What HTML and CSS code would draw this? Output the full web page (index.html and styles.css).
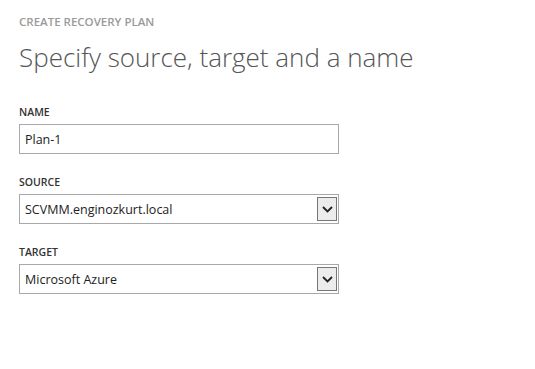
FILE: index.html
```html
<!DOCTYPE html>
<html>
<head>
    <meta charset="utf-8">
    <link rel="stylesheet" href="styles.css">
</head>
<body>
    <div class="wizard-page">
        <div class="wizard-step">CREATE RECOVERY PLAN</div>
        <h1>Specify source, target and a name</h1>

        <div class="field">
            <label for="planName">NAME</label>
            <input type="text" id="planName" value="Plan-1">
        </div>
        <div class="field">
            <label>SOURCE</label>
            <div class="select-box">
                <span>SCVMM.enginozkurt.local</span>
                <span class="select-arrow">
                    <svg width="11" height="7" viewBox="0 0 11 7"><path d="M1 1 L5.5 5.5 L10 1" fill="none" stroke="#222" stroke-width="1.8"/></svg>
                </span>
            </div>
        </div>
        <div class="field">
            <label>TARGET</label>
            <div class="select-box">
                <span>Microsoft Azure</span>
                <span class="select-arrow">
                    <svg width="11" height="7" viewBox="0 0 11 7"><path d="M1 1 L5.5 5.5 L10 1" fill="none" stroke="#222" stroke-width="1.8"/></svg>
                </span>
            </div>
        </div>
    </div>
</body>
</html>
```

FILE: styles.css
```css
body {
    margin: 0;
    background-color: #fff;
    font-family: 'Open Sans', 'Noto Sans', sans-serif;
    color: #222;
}
.wizard-page {
    padding: 15px 19px;
    width: 320px;
}
.wizard-step {
    font-size: 11.5px;
    font-weight: 600;
    color: #9a9a9a;
    line-height: 14px;
}
.wizard-page h1 {
    margin: 10px 0 0;
    font-size: 26px;
    font-weight: 300;
    color: #555;
    line-height: 36px;
    white-space: nowrap;
}
.field {
    margin-top: 30px;
}
.field + .field {
    margin-top: 21px;
}
.field label {
    display: block;
    font-size: 10.5px;
    font-weight: 600;
    color: #333;
    line-height: 14px;
    margin-bottom: 5px;
}
.field input {
    box-sizing: border-box;
    width: 320px;
    height: 30px;
    padding: 0 5px;
    border: 1px solid #a8a8a8;
    font-family: inherit;
    font-size: 12.5px;
    color: #222;
    outline: none;
}
.select-box {
    box-sizing: border-box;
    width: 320px;
    height: 30px;
    border: 1px solid #a8a8a8;
    display: flex;
    align-items: center;
    justify-content: space-between;
    padding: 0 1px 0 5px;
    font-size: 12.5px;
}
.select-arrow {
    box-sizing: border-box;
    width: 20px;
    height: 24px;
    border: 1px solid #777;
    background-color: #ececec;
    display: flex;
    align-items: center;
    justify-content: center;
}
```
